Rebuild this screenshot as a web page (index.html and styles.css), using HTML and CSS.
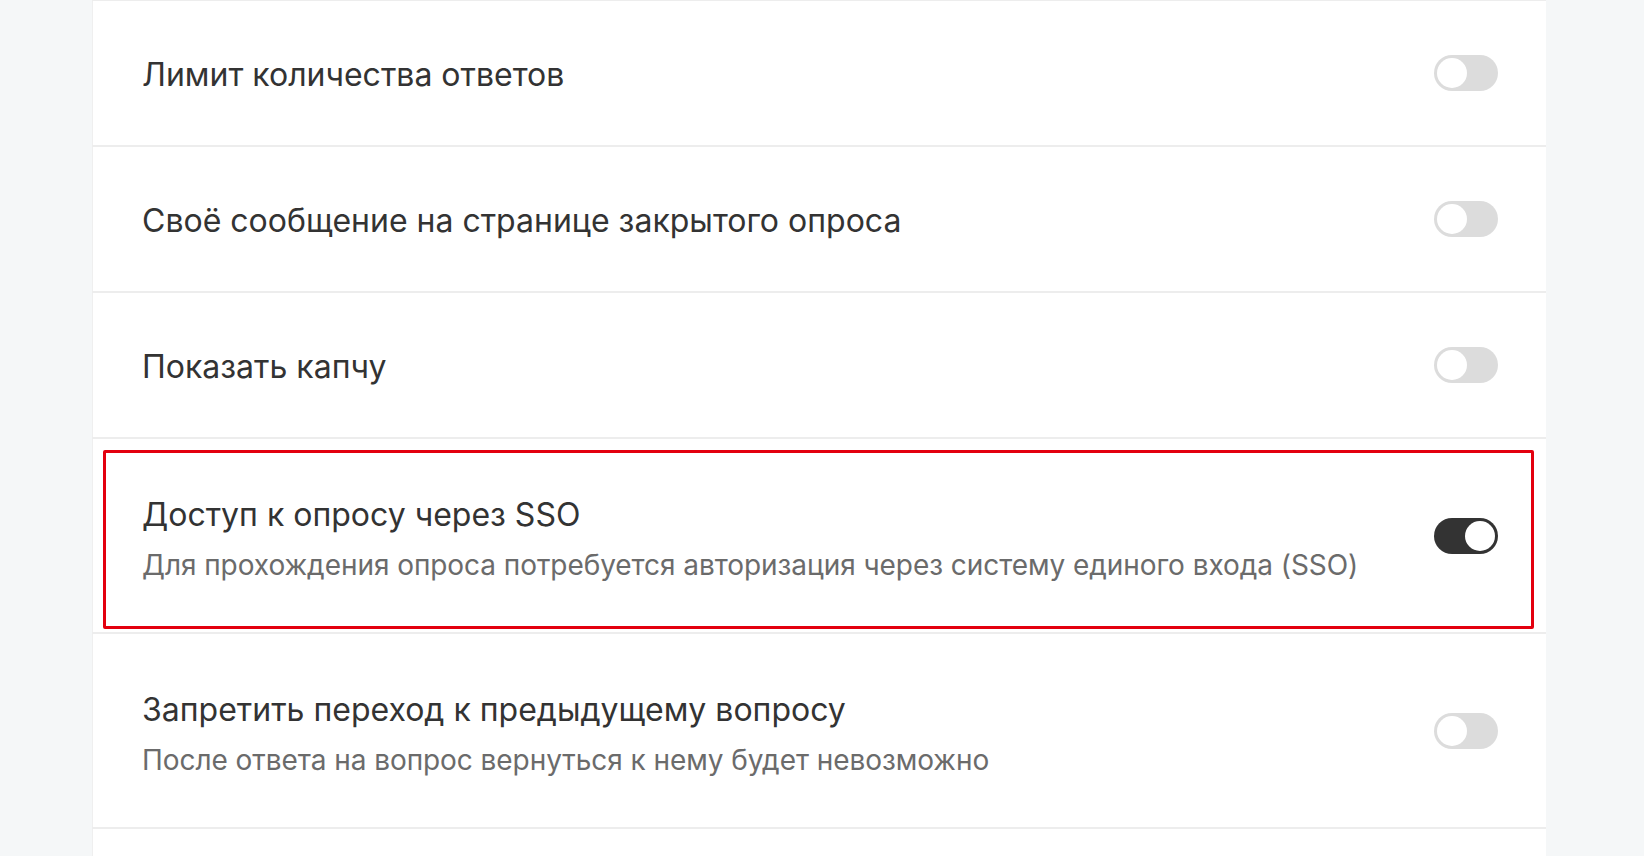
FILE: index.html
```html
<!DOCTYPE html>
<html lang="ru">
<head>
<meta charset="utf-8">
<title>Настройки опроса</title>
<link rel="stylesheet" href="styles.css">
</head>
<body>
<div class="page">
  <div class="list">
    <div class="card">
      <div class="text"><div class="title">Лимит количества ответов</div></div>
      <span class="toggle"><span class="knob"></span></span>
    </div>
    <div class="card">
      <div class="text"><div class="title">Своё сообщение на странице закрытого опроса</div></div>
      <span class="toggle"><span class="knob"></span></span>
    </div>
    <div class="card">
      <div class="text"><div class="title">Показать капчу</div></div>
      <span class="toggle"><span class="knob"></span></span>
    </div>
    <div class="card card-tall card-marked">
      <div class="text">
        <div class="title">Доступ к опросу через SSO</div>
        <div class="subtitle">Для прохождения опроса потребуется авторизация через систему единого входа (SSO)</div>
      </div>
      <span class="toggle on"><span class="knob"></span></span>
      <span class="highlight"></span>
    </div>
    <div class="card card-tall">
      <div class="text">
        <div class="title">Запретить переход к предыдущему вопросу</div>
        <div class="subtitle">После ответа на вопрос вернуться к нему будет невозможно</div>
      </div>
      <span class="toggle"><span class="knob"></span></span>
    </div>
    <div class="card"></div>
  </div>
</div>
</body>
</html>
```
FILE: styles.css
```css
* { box-sizing: border-box; }
html, body {
  margin: 0;
  height: 100%;
  overflow: hidden;
}
body {
  background: #f5f7f8;
  font-family: Inter, "Noto Sans", sans-serif;
}
.page {
  margin-left: 92px;
  width: 1454px;
}
.list {
  display: flex;
  flex-direction: column;
  gap: 2px;
  padding-top: 1px;
  background: #ededed;
}
.card {
  position: relative;
  display: flex;
  align-items: center;
  justify-content: space-between;
  min-height: 144px;
  padding: 0 48px 0 49px;
  background: #fff;
  border-left: 1px solid #efefef;
}
.card-tall {
  min-height: 193px;
}
.text {
  display: flex;
  flex-direction: column;
  gap: 13px;
  margin-top: 3px;
}
.title {
  font-size: 32px;
  line-height: 40px;
  color: #333;
}
.subtitle {
  font-size: 28px;
  line-height: 34px;
  letter-spacing: -0.06px;
  color: #6b6b6b;
}
.card-tall .text {
  margin-top: 5px;
}
.toggle {
  position: relative;
  flex: none;
  width: 64px;
  height: 36px;
  border-radius: 18px;
  background: #dcdcdc;
}
.toggle .knob {
  position: absolute;
  top: 3px;
  left: 3px;
  width: 30px;
  height: 30px;
  border-radius: 50%;
  background: #fff;
}
.toggle.on {
  background: #333;
}
.toggle.on .knob {
  left: 31px;
}
.highlight {
  position: absolute;
  left: 10px;
  right: 12px;
  top: 11px;
  bottom: 3px;
  border: 3px solid #e3000f;
  border-radius: 2px;
  pointer-events: none;
}
```
